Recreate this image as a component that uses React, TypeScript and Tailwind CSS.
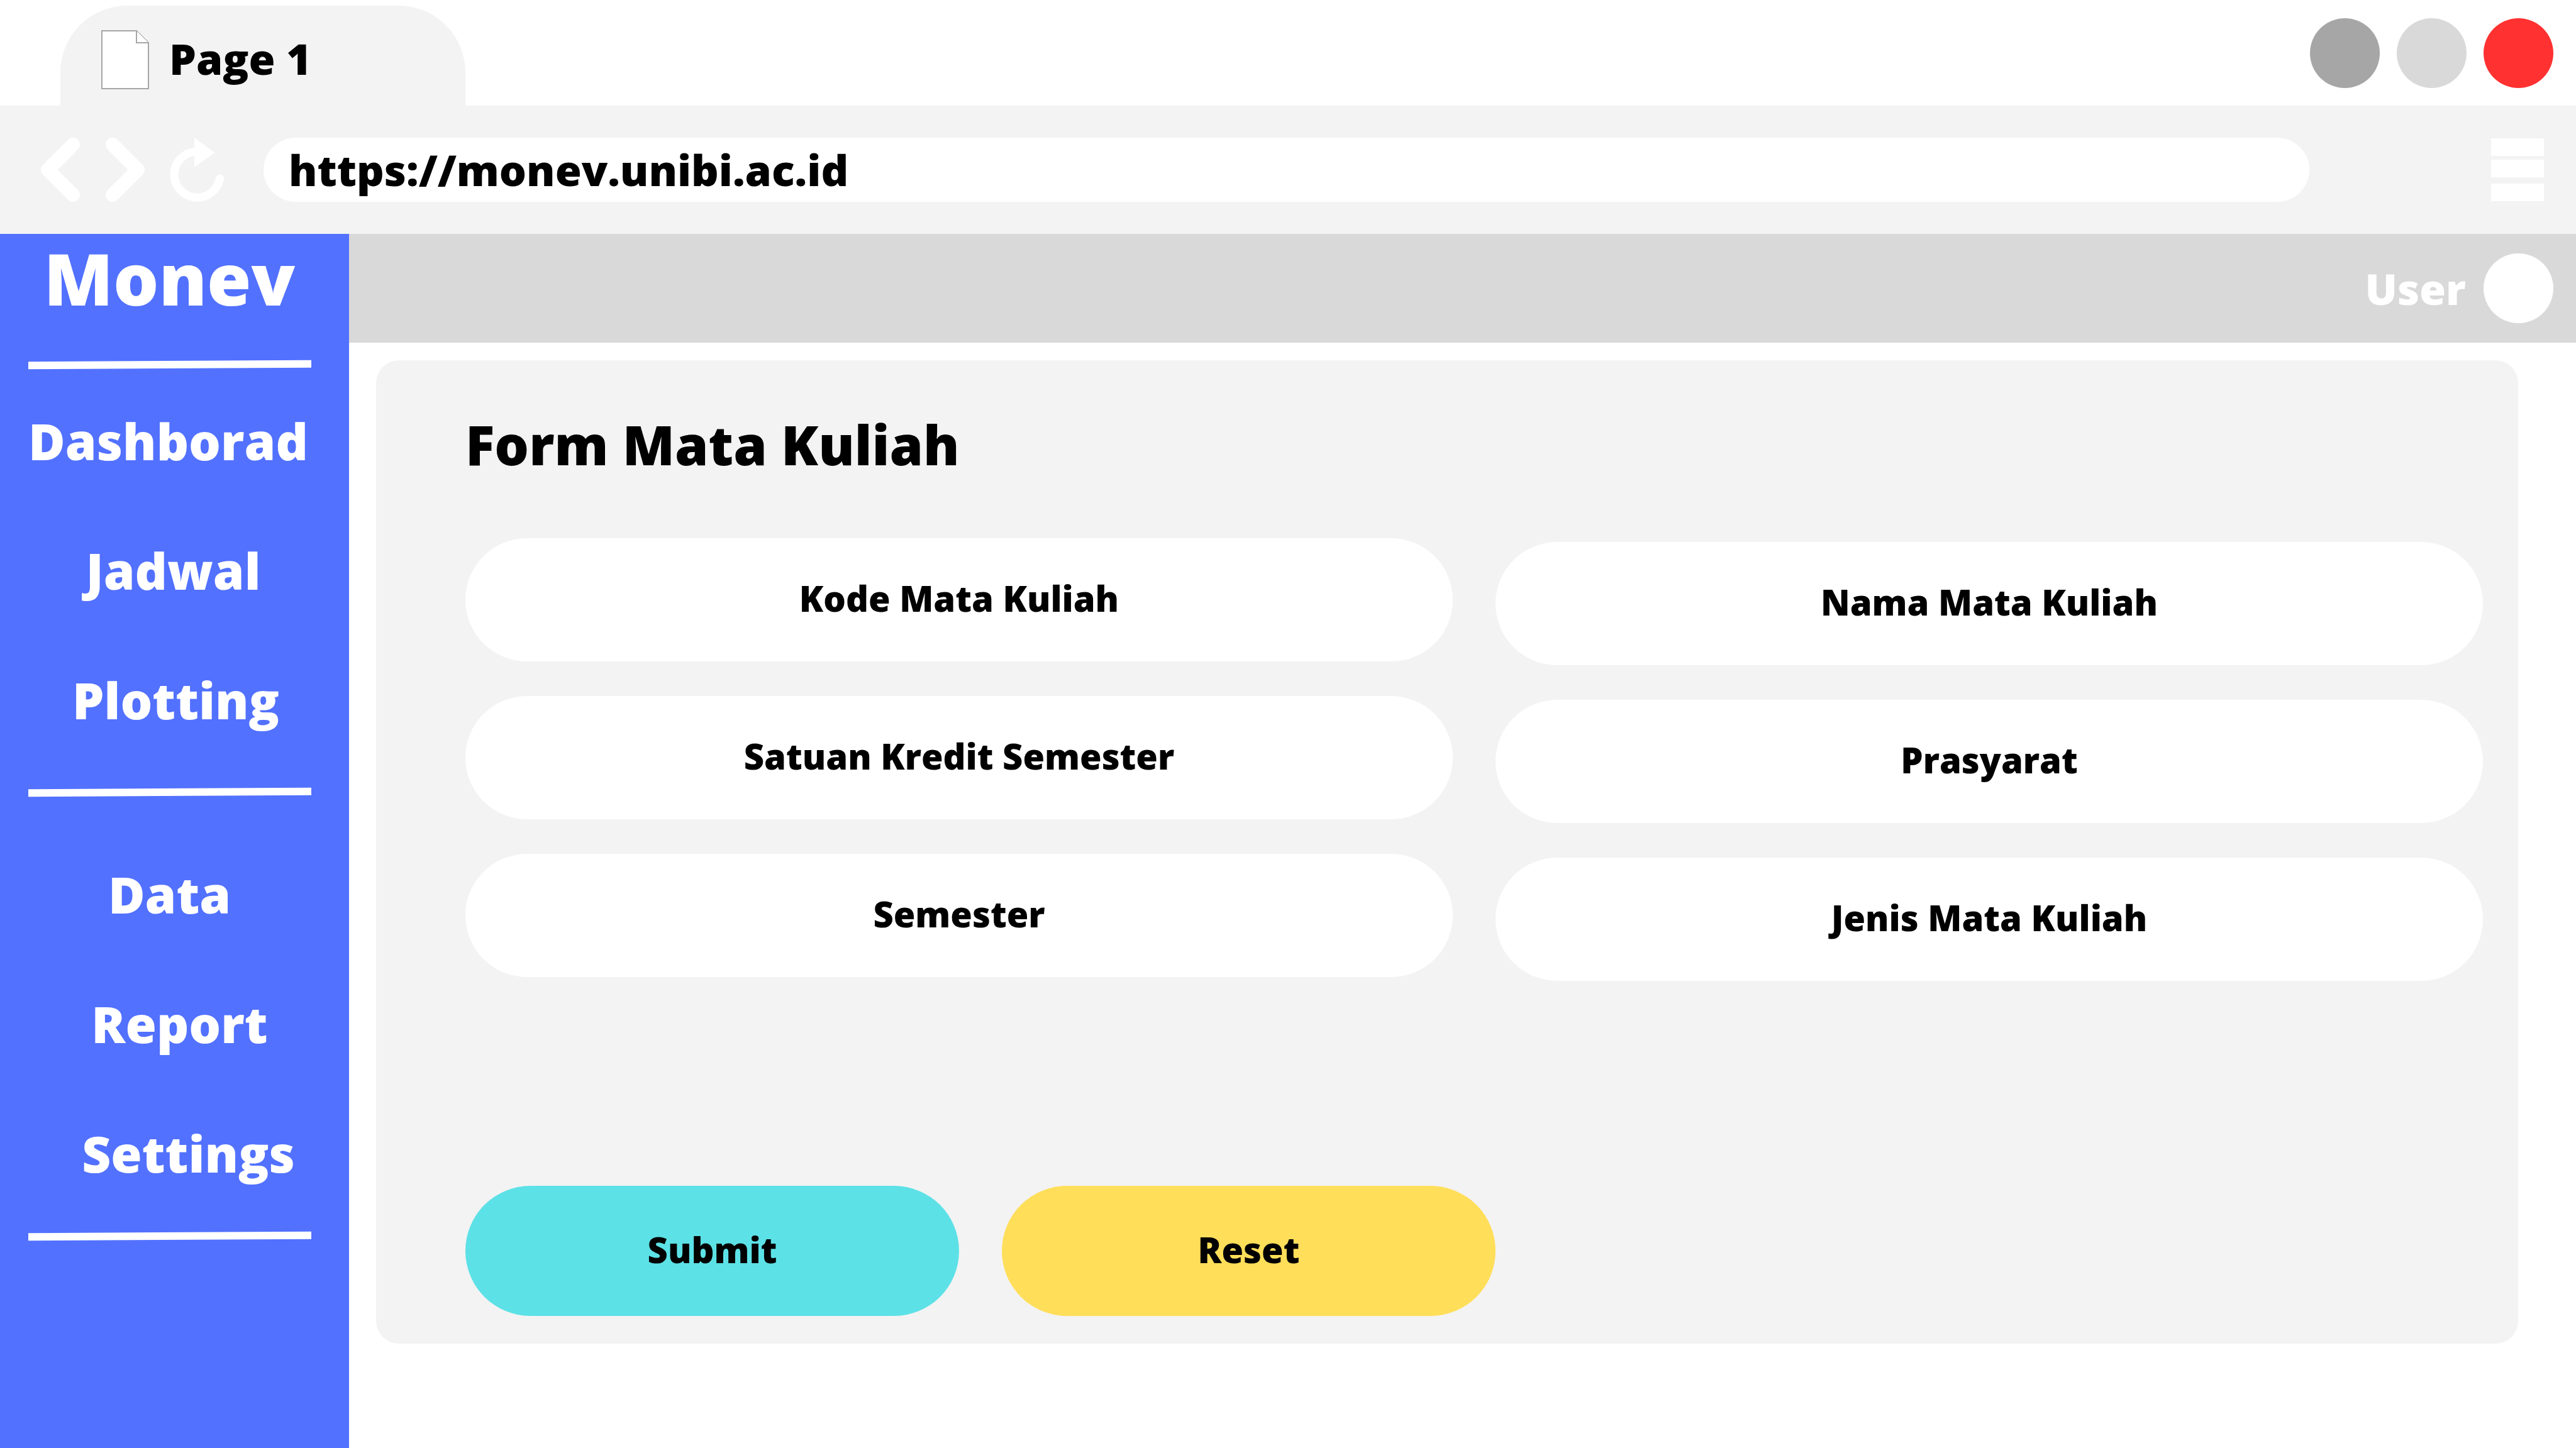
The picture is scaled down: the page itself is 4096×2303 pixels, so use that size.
type NavItem = { label: string; pad: string };

const mainNav: NavItem[] = [
  { label: "Dashborad", pad: "pl-0" },
  { label: "Jadwal", pad: "pl-4" },
  { label: "Plotting", pad: "pl-6" },
];

const dataNav: NavItem[] = [
  { label: "Data", pad: "pl-1" },
  { label: "Report", pad: "pl-9" },
  { label: "Settings", pad: "pl-16" },
];

const leftFields = ["Kode Mata Kuliah", "Satuan Kredit Semester", "Semester"];
const rightFields = ["Nama Mata Kuliah", "Prasyarat", "Jenis Mata Kuliah"];

function PageIcon() {
  return (
    <svg viewBox="0 0 76 94" className="h-[94px] w-[76px]" fill="#ffffff" stroke="#a6a6a6" strokeWidth="2" aria-hidden="true">
      <path d="M1 1H56L75 20V93H1Z" />
      <path d="M56 1V20H75" />
    </svg>
  );
}

function Chevron({ flip = false }: { flip?: boolean }) {
  return (
    <svg
      viewBox="0 0 64 102"
      className={flip ? "h-[102px] w-16 -scale-x-100" : "h-[102px] w-16"}
      fill="none"
      stroke="#ffffff"
      strokeWidth="22"
      strokeLinecap="round"
      strokeLinejoin="round"
      aria-hidden="true"
    >
      <path d="M52 11L12 51L52 91" />
    </svg>
  );
}

function ReloadIcon() {
  return (
    <svg viewBox="0 0 88 102" className="h-[102px] w-[88px]" aria-hidden="true">
      <path d="M40 22.3A36.5 36.5 0 1 0 79.5 65" fill="none" stroke="#ffffff" strokeWidth="13" strokeLinecap="butt" />
      <circle cx="79.5" cy="65" r="6.5" fill="#ffffff" />
      <path d="M39 0L71.6 24L39 46.7Z" fill="#ffffff" />
    </svg>
  );
}

function MenuIcon() {
  return (
    <svg viewBox="0 0 84 100" className="h-[100px] w-[84px]" fill="#ffffff" aria-hidden="true">
      <rect width="84" height="28" />
      <rect y="34" width="84" height="28" />
      <rect y="72" width="84" height="28" />
    </svg>
  );
}

function Rule() {
  return (
    <div className="pr-10 pl-[45px]">
      <hr className="h-3 w-full -rotate-[0.3deg] border-0 bg-white" />
    </div>
  );
}

function NavGroup({ items }: { items: NavItem[] }) {
  return (
    <ul className="flex flex-col gap-[98px]">
      {items.map((item) => (
        <li key={item.label} className={item.pad}>
          <a href="#" className="block text-center text-[80px] leading-[108px]">
            {item.label}
          </a>
        </li>
      ))}
    </ul>
  );
}

function FieldColumn({ fields }: { fields: string[] }) {
  return (
    <div className="flex flex-1 flex-col gap-[55px]">
      {fields.map((field) => (
        <input
          key={field}
          type="text"
          aria-label={field}
          placeholder={field}
          className="h-[196px] w-full rounded-full bg-white px-16 pb-1.5 text-center text-[56px] placeholder:text-black placeholder:opacity-100"
        />
      ))}
    </div>
  );
}

export default function App() {
  return (
    <div className="flex min-h-screen flex-col bg-white font-['Open_Sans',sans-serif] font-extrabold text-black">
      <header>
        <div className="flex h-[168px] items-start justify-between pr-9 pl-24">
          <div className="mt-[9px] flex h-[159px] w-[644px] gap-8 rounded-t-[106px] bg-[#f3f3f3] pl-[65px]">
            <div className="mt-[39px]">
              <PageIcon />
            </div>
            <span className="mt-[37px] text-[68px] leading-[94px]">Page 1</span>
          </div>
          <div className="mt-[29px] flex gap-[27px]">
            <button type="button" aria-label="Minimize" className="size-[111px] rounded-full bg-[#a6a6a6]" />
            <button type="button" aria-label="Maximize" className="size-[111px] rounded-full bg-[#d9d9d9]" />
            <button type="button" aria-label="Close" className="size-[111px] rounded-full bg-[#ff3131]" />
          </div>
        </div>
        <div className="flex h-[204px] items-center bg-[#f3f3f3] pr-[51px] pl-16">
          <div className="flex w-[355px] shrink-0 gap-[39px]">
            <button type="button" aria-label="Back">
              <Chevron />
            </button>
            <button type="button" aria-label="Forward">
              <Chevron flip />
            </button>
            <button type="button" aria-label="Reload">
              <ReloadIcon />
            </button>
          </div>
          <input
            type="text"
            aria-label="Address"
            defaultValue="https://monev.unibi.ac.id"
            className="h-[102px] min-w-0 flex-1 rounded-full bg-white pl-10 text-[68px]"
          />
          <button type="button" aria-label="Menu" className="ml-[289px]">
            <MenuIcon />
          </button>
        </div>
      </header>

      <div className="flex flex-1">
        <aside className="w-[555px] shrink-0 bg-[#5271ff] pr-5 text-white">
          <h1 className="pl-1 text-center text-[114px] leading-[140px]">Monev</h1>
          <div className="pt-[62px]">
            <Rule />
          </div>
          <nav aria-label="Main" className="pt-[61px] pb-[87px]">
            <NavGroup items={mainNav} />
          </nav>
          <Rule />
          <nav aria-label="Data" className="pt-[102px] pb-[72px]">
            <NavGroup items={dataNav} />
          </nav>
          <Rule />
        </aside>

        <div className="flex min-w-0 flex-1 flex-col">
          <div className="flex h-[173px] items-center justify-end gap-7 bg-[#d9d9d9] pr-9 text-white">
            <span className="text-[68px] leading-[94px]">User</span>
            <button type="button" aria-label="User profile" className="size-[111px] rounded-full bg-white" />
          </div>

          <main className="mt-7 mr-[92px] ml-[43px] rounded-[36px] bg-[#f3f3f3] pt-[75px] pr-14 pb-11 pl-[142px]">
            <h2 className="text-[86px] leading-[118px]">Form Mata Kuliah</h2>
            <form>
              <div className="mt-[90px] flex gap-[68px]">
                <FieldColumn fields={leftFields} />
                <div className="flex flex-1 pt-1.5">
                  <FieldColumn fields={rightFields} />
                </div>
              </div>
              <div className="mt-[326px] flex gap-[68px]">
                <button type="submit" className="h-[207px] w-[785px] rounded-full bg-[#5ce1e6] pb-1.5 text-[56px]">
                  Submit
                </button>
                <button type="reset" className="h-[207px] w-[785px] rounded-full bg-[#ffde59] pb-1.5 text-[56px]">
                  Reset
                </button>
              </div>
            </form>
          </main>
        </div>
      </div>
    </div>
  );
}
